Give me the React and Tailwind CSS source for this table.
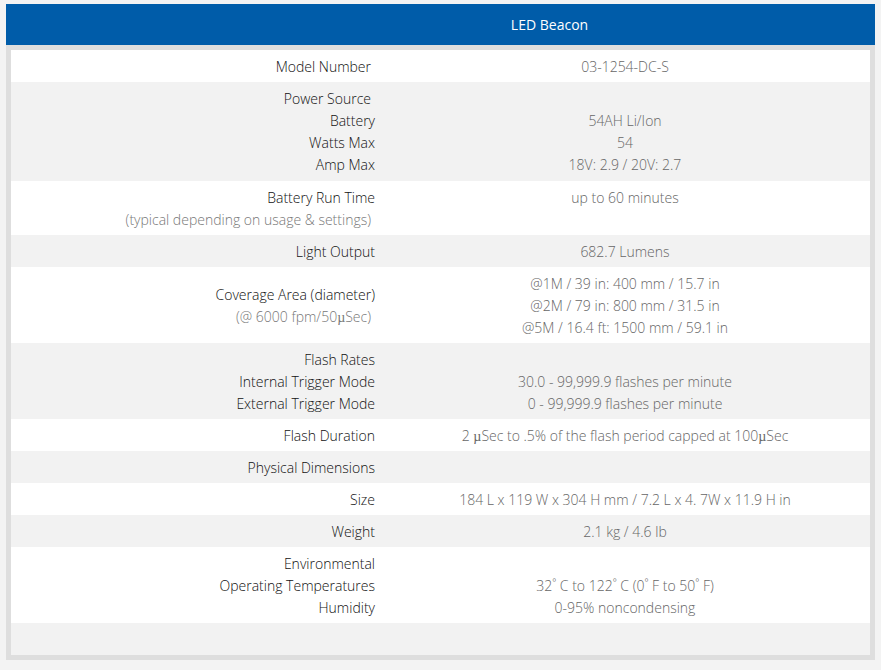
import React from "react";

const Mu = () => <span className="font-['Liberation_Serif',serif] font-normal leading-[0]">µ</span>;

const L = ({ children, sub }) => (
  <div className={sub ? "text-[#777] pr-[4px]" : "text-[#111]"}>{children || "\u00a0"}</div>
);
const V = ({ children }) => <div>{children || "\u00a0"}</div>;

const rows = [
  { left: [["Model Number", true, true]], right: ["03-1254-DC-S"] },
  { left: [["Power Source", false, true], ["Battery"], ["Watts Max"], ["Amp Max"]], right: ["", "54AH Li/Ion", "54", "18V: 2.9 / 20V: 2.7"], extra: true },
  { left: [["Battery Run Time"], ["(typical depending on usage & settings)", true]], right: ["up to 60 minutes", ""] },
  { left: [["Light Output"]], right: ["682.7 Lumens"] },
  {
    left: [["Coverage Area (diameter)"], [<>(@ 6000 fpm/50<Mu />Sec)</>, true]],
    right: ["@1M / 39 in: 400 mm / 15.7 in", "@2M / 79 in: 800 mm / 31.5 in", "@5M / 16.4 ft: 1500 mm / 59.1 in"],
    middle: true,
  },
  { left: [["Flash Rates"], ["Internal Trigger Mode"], ["External Trigger Mode"]], right: ["", "30.0 - 99,999.9 flashes per minute", "0 - 99,999.9 flashes per minute"] },
  {
    left: [["Flash Duration"]],
    right: [<>2 <Mu />Sec to .5% of the flash period capped at 100<Mu />Sec</>],
  },
  { left: [["Physical Dimensions"]], right: [""] },
  { left: [["Size"]], right: ["184 L x 119 W x 304 H mm / 7.2 L x 4. 7W x 11.9 H in"] },
  { left: [["Weight"]], right: ["2.1 kg / 4.6 lb"] },
  { left: [["Environmental"], ["Operating Temperatures"], ["Humidity"]], right: ["", "32˚ C to 122˚ C (0˚ F to 50˚ F)", "0-95% noncondensing"] },
  { left: [[""]], right: [""] },
];

export default function App() {
  return (
    <div className="w-[881px] h-[670px] bg-[#f3f3f3] pt-[4px] px-[6px] font-['Open_Sans',sans-serif] text-[14px] leading-[22px] font-light">
      <div className="h-[41px] bg-[#005ca9] flex items-center justify-center pl-[218px] text-white text-[14px] font-normal">
        LED Beacon
      </div>
      <div className="border-[5px] border-[#dedede] bg-white">
        {rows.map((r, i) => (
          <div key={i} className={`flex pt-[6px] ${r.extra ? "pb-[5px]" : "pb-[4px]"} ${i % 2 === 1 ? "bg-[#f2f2f2]" : "bg-white"}`}>
            <div className={`w-[369px] pr-[5px] text-right flex flex-col ${r.middle ? "justify-center" : ""}`}>
              {r.left.map(([t, sub, pad], j) =>
                pad ? (
                  <div key={j} className="text-[#111] pr-[4px]">{t}</div>
                ) : (
                  <L key={j} sub={sub}>{t}</L>
                )
              )}
            </div>
            <div className="flex-1 text-center text-[#666]">
              {r.right.map((t, j) => (
                <V key={j}>{t}</V>
              ))}
            </div>
          </div>
        ))}
      </div>
    </div>
  );
}
